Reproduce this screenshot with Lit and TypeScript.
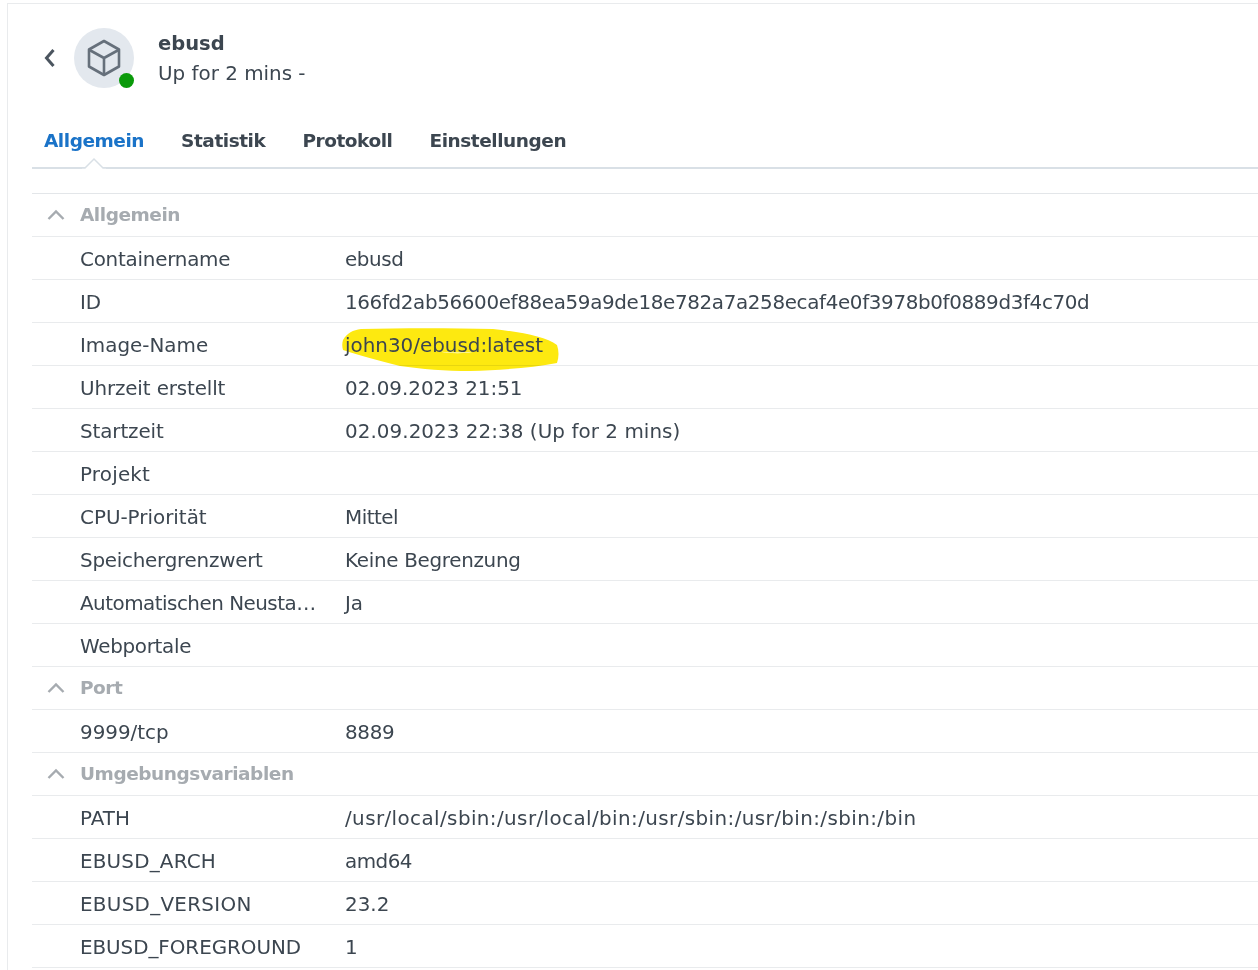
import { LitElement, html, css, svg } from "lit";
import { customElement } from "lit/decorators.js";

// ks / vs: letter spacing (px) that fits each text to its measured width
type Row = { k: string; v: string; ks?: number; vs?: number; mark?: boolean };
type Section = { title: string; rows: Row[] };

const sections: Section[] = [
  {
    title: "Allgemein",
    rows: [
      { k: "Containername", v: "ebusd", ks: -0.23, vs: -0.4 },
      { k: "ID", v: "166fd2ab56600ef88ea59a9de18e782a7a258ecaf4e0f3978b0f0889d3f4c70d", vs: -0.355 },
      { k: "Image-Name", v: "john30/ebusd:latest", mark: true },
      { k: "Uhrzeit erstellt", v: "02.09.2023 21:51", ks: -0.13 },
      { k: "Startzeit", v: "02.09.2023 22:38 (Up for 2 mins)", ks: -0.1, vs: 0.06 },
      { k: "Projekt", v: "", ks: 0.2 },
      { k: "CPU-Priorität", v: "Mittel", vs: -0.5 },
      { k: "Speichergrenzwert", v: "Keine Begrenzung", ks: -0.24, vs: -0.3 },
      { k: "Automatischen Neusta…", v: "Ja", ks: -0.5 },
      { k: "Webportale", v: "", ks: -0.3 },
    ],
  },
  { title: "Port", rows: [{ k: "9999/tcp", v: "8889", vs: -0.3 }] },
  {
    title: "Umgebungsvariablen",
    rows: [
      { k: "PATH", v: "/usr/local/sbin:/usr/local/bin:/usr/sbin:/usr/bin:/sbin:/bin", vs: 0.41 },
      { k: "EBUSD_ARCH", v: "amd64", ks: 0.2, vs: -0.5 },
      { k: "EBUSD_VERSION", v: "23.2", ks: 0.3 },
      { k: "EBUSD_FOREGROUND", v: "1", ks: -0.05 },
    ],
  },
];

const chevron = svg`<path d="M1.5 10 L9 2.5 L16.5 10" fill="none" stroke="#a6abb0" stroke-width="2.4"/>`;

@customElement("app-root")
export class AppRoot extends LitElement {
  static styles = css`
    :host {
      display: block;
      width: 1258px;
      height: 970px;
      overflow: hidden;
      background: #fff;
      font-family: "DejaVu Sans", sans-serif;
      color: #3c4650;
      font-size: 19.9px;
    }
    .frame {
      box-sizing: border-box;
      height: 970px;
      margin-left: 7px;
      margin-top: 3px;
      padding-left: 24px;
      border-left: 1px solid #e9ebed;
      border-top: 1px solid #e9ebed;
    }
    .head {
      display: flex;
      align-items: center;
      height: 84px;
      margin-top: 12px;
    }
    .back {
      width: 42px;
      display: flex;
      padding-left: 11px;
      box-sizing: border-box;
    }
    .avatar {
      position: relative;
      width: 60px;
      height: 60px;
      border-radius: 50%;
      background: #e3e8ee;
      display: flex;
      align-items: center;
      justify-content: center;
      margin-right: 24px;
    }
    .dot {
      position: absolute;
      right: 0;
      bottom: 0;
      width: 15px;
      height: 15px;
      border-radius: 50%;
      background: #0a9a0a;
    }
    .title {
      margin-top: 2px;
    }
    .name {
      font-weight: 700;
      font-size: 19.5px;
      line-height: 30px;
    }
    .status {
      line-height: 30px;
    }
    .tabs {
      display: flex;
      gap: 37px;
      height: 48px;
      margin-top: 19px;
      padding-left: 12px;
      border-bottom: 2px solid #d9e0e6;
      position: relative;
      font-weight: 700;
      font-size: 18.5px;
      letter-spacing: -0.45px;
      line-height: 43px;
    }
    .tabs .active {
      color: #1a73c8;
    }
    .notch {
      position: absolute;
      left: 50px;
      bottom: -2px;
      display: block;
    }
    .list {
      margin-top: 24px;
      border-top: 1px solid #e3e6e9;
    }
    .row {
      display: flex;
      align-items: center;
      height: 42px;
      border-bottom: 1px solid #e9ebed;
      white-space: nowrap;
    }
    .sec {
      color: #a6abb0;
      font-weight: 700;
      font-size: 18.5px;
      letter-spacing: -0.45px;
    }
    .sec span {
      margin-top: -2px;
    }
    .sec svg {
      width: 18px;
      height: 12px;
      margin: 0 15px;
      flex: none;
    }
    .k {
      box-sizing: border-box;
      width: 313px;
      margin-top: 2px;
      padding-left: 48px;
      flex: none;
    }
    .v {
      position: relative;
      margin-top: 2px;
    }
    .txt {
      position: relative;
    }
    .mark {
      position: absolute;
      left: -4px;
      top: -9px;
      mix-blend-mode: multiply;
      pointer-events: none;
    }
  `;

  render() {
    return html`
      <div class="frame">
        <div class="head">
          <div class="back">
            <svg width="14" height="22" viewBox="0 0 14 22">
              <path d="M10.5 3 L3.5 11 L10.5 19" fill="none" stroke="#4b555f" stroke-width="3" />
            </svg>
          </div>
          <div class="avatar">
            <svg width="36" height="38" viewBox="0 0 36 38" fill="none" stroke="#66707b" stroke-width="2.6" stroke-linejoin="round">
              <path d="M18 2 L33 10.5 V27.5 L18 36 L3 27.5 V10.5 Z" />
              <path d="M3.5 11 L18 19 L32.5 11 M18 19 V35.5" />
            </svg>
            <span class="dot"></span>
          </div>
          <div class="title">
            <div class="name">ebusd</div>
            <div class="status">Up for 2 mins -</div>
          </div>
        </div>
        <div class="tabs">
          <span class="active">Allgemein</span>
          <span>Statistik</span>
          <span>Protokoll</span>
          <span>Einstellungen</span>
          <svg class="notch" width="24" height="12" viewBox="0 0 24 12">
            <path d="M0 11 H3 L12 2 L21 11 H24 V12 H0 Z" fill="#fff" />
            <path d="M0 11 H3 L12 2 L21 11 H24" fill="none" stroke="#d9e0e6" stroke-width="1.5" />
          </svg>
        </div>
        <div class="list">
          ${sections.map(
            (s) => html`
              <div class="row sec">
                <svg viewBox="0 0 18 12">${chevron}</svg>
                <span>${s.title}</span>
              </div>
              ${s.rows.map(
                (r) => html`
                  <div class="row">
                    <div class="k" style="letter-spacing:${r.ks ?? 0}px">${r.k}</div>
                    <div class="v">
                      ${r.mark
                        ? html`<svg class="mark" width="220" height="48" viewBox="0 0 220 48">
                            <path
                              fill-rule="evenodd"
                              d="M2 15 C6 8 12 5 20 4 C60 3 110 3 152 4 C180 7 205 12 216 20 C218 26 218 32 216 38 C190 43 160 45 129 46 C105 46 80 44 59 41 C38 36 18 30 2 25 C1 22 1 18 2 15 Z M96 26 C108 28 124 28 136 26 C125 29 108 29 96 26 Z"
                              fill="#fde910"
                            />
                          </svg>`
                        : ""}
                      <span class="txt" style="letter-spacing:${r.vs ?? 0}px">${r.v}</span>
                    </div>
                  </div>
                `
              )}
            `
          )}
        </div>
      </div>
    `;
  }
}
